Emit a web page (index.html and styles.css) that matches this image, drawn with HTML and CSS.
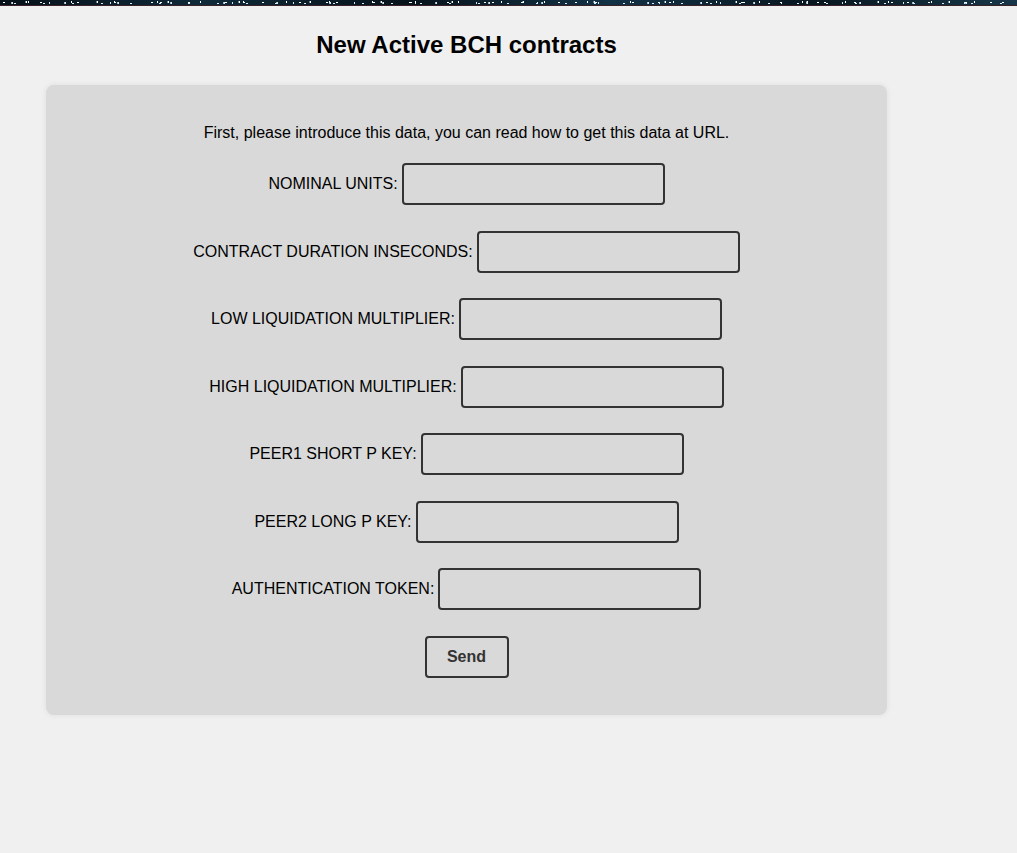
FILE: index.html
```html
<!DOCTYPE html>
<html lang="en">
<head>
<meta charset="utf-8">
<title>New Active BCH contracts</title>
<link rel="stylesheet" href="styles.css">
</head>
<body>
<div class="banner"></div>
<main class="page">
  <h1 class="title">New Active BCH contracts</h1>
  <form class="card">
    <p class="intro">First, please introduce this data, you can read how to get this data at URL.</p>
    <div class="row"><label class="label">NOMINAL UNITS:</label><input class="field" type="text"></div>
    <div class="row"><label class="label">CONTRACT DURATION INSECONDS:</label><input class="field" type="text"></div>
    <div class="row"><label class="label">LOW LIQUIDATION MULTIPLIER:</label><input class="field" type="text"></div>
    <div class="row"><label class="label">HIGH LIQUIDATION MULTIPLIER:</label><input class="field" type="text"></div>
    <div class="row"><label class="label">PEER1 SHORT P KEY:</label><input class="field" type="text"></div>
    <div class="row"><label class="label">PEER2 LONG P KEY:</label><input class="field" type="text"></div>
    <div class="row"><label class="label">AUTHENTICATION TOKEN:</label><input class="field" type="text"></div>
    <div class="actions"><button class="send" type="button">Send</button></div>
  </form>
</main>
</body>
</html>
```

FILE: styles.css
```css
html, body {
  margin: 0;
  padding: 0;
}
body {
  background: #f0f0f0;
  font-family: "Liberation Sans", Arial, sans-serif;
  color: #000;
  min-height: 853px;
}
.banner {
  height: 5px;
  background:
    radial-gradient(circle at 10% 50%, #ffffff 0 0.8px, transparent 1px),
    radial-gradient(circle at 23% 60%, #cfe6f0 0 0.8px, transparent 1px),
    radial-gradient(circle at 37% 40%, #ffffff 0 0.8px, transparent 1px),
    radial-gradient(circle at 52% 70%, #dbeaf2 0 0.8px, transparent 1px),
    radial-gradient(circle at 66% 40%, #ffffff 0 0.8px, transparent 1px),
    radial-gradient(circle at 81% 60%, #cfe6f0 0 0.8px, transparent 1px),
    radial-gradient(circle at 94% 50%, #ffffff 0 0.8px, transparent 1px),
    linear-gradient(90deg, #061018 0%, #0f2a3a 20%, #07131b 40%, #123246 60%, #08161f 80%, #17384a 100%);
  background-size: 37px 5px, 53px 5px, 71px 5px, 29px 5px, 43px 5px, 61px 5px, 83px 5px, 100% 5px;
  border-bottom: 1px solid #3a2228;
}
.page {
  width: 841px;
  margin-left: 46px;
}
.title {
  margin: 25px 0 26px;
  font-size: 24px;
  line-height: 28px;
  font-weight: bold;
  text-align: center;
  color: #000;
}
.card {
  background: #d9d9d9;
  border-radius: 8px;
  box-shadow: 0 0 6px rgba(0, 0, 0, 0.08);
  padding: 39px 0 37px;
  text-align: center;
}
.intro {
  margin: 0 0 21px;
  font-size: 16px;
  line-height: 18px;
}
.row {
  display: flex;
  justify-content: center;
  align-items: center;
  gap: 4px;
  margin-bottom: 25.5px;
}
.label {
  font-size: 16px;
  line-height: 18px;
}
.field {
  box-sizing: border-box;
  width: 263px;
  height: 42px;
  border: 2px solid #333;
  border-radius: 4px;
  background: #d9d9d9;
  margin: 0;
  padding: 0 8px;
  font: 16px "Liberation Sans", Arial, sans-serif;
}
.actions {
  display: flex;
  justify-content: center;
}
.send {
  box-sizing: border-box;
  width: 84px;
  height: 42px;
  border: 2px solid #333;
  border-radius: 4px;
  background: #d9d9d9;
  color: #333;
  font: bold 16px "Liberation Sans", Arial, sans-serif;
  margin: 0;
  padding: 0;
}
```
